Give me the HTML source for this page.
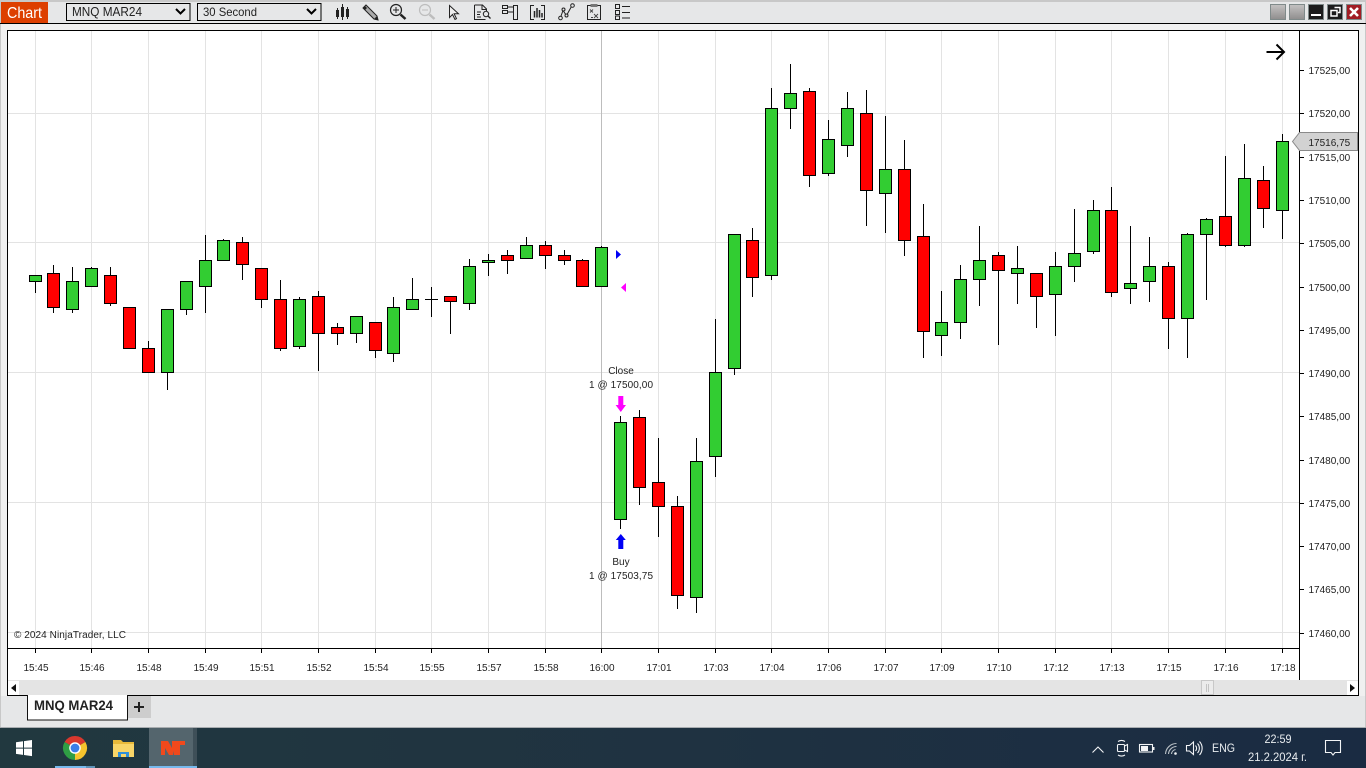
<!DOCTYPE html>
<html><head><meta charset="utf-8"><title>Chart</title>
<style>
html,body{margin:0;padding:0;width:1366px;height:768px;overflow:hidden;background:#e6e7e8}
svg{display:block;position:absolute;left:0;top:0}
text{font-family:"Liberation Sans",sans-serif;fill:#222}
.a text{font-size:10px}
.g{stroke:#e3e3e3;stroke-width:1;fill:none}
.w{stroke:#000;stroke-width:1}
.u{fill:#32cd32;stroke:#000;stroke-width:1}
.d{fill:#f00;stroke:#000;stroke-width:1}
.i{fill:none;stroke:#222;stroke-width:1}
.t{fill:none;stroke:#f2f4f6;stroke-width:1.1}
</style></head><body>
<svg width="1366" height="768" viewBox="0 0 1366 768">
<defs><linearGradient id="tb" x1="0" x2="1" y1="0" y2="0"><stop offset="0" stop-color="#21383f"/><stop offset="0.5" stop-color="#1f3241"/><stop offset="1" stop-color="#1a2b42"/></linearGradient>
<linearGradient id="gb" x1="0" x2="0" y1="0" y2="1"><stop offset="0" stop-color="#c4c2c2"/><stop offset="1" stop-color="#8f8d8d"/></linearGradient></defs>
<!-- window backgrounds -->
<rect width="1366" height="768" fill="#e6e7e8"/>
<rect y="0" width="1366" height="2" fill="#c8c8c8"/>
<rect y="24" width="1366" height="672" fill="#f0f0f0"/>
<rect y="696" width="1366" height="31" fill="#e6e7e8"/>
<rect x="0" y="0" width="1" height="727" fill="#c8c8c8"/><rect x="1365" y="0" width="1" height="727" fill="#c8c8c8"/>
<rect y="23" width="1366" height="1" fill="#000"/>
<!-- Chart tag -->
<rect x="1" y="2" width="47" height="21" fill="#dd3f00"/>
<text x="7" y="18" textLength="35" lengthAdjust="spacingAndGlyphs" style="font-size:16px;fill:#fff">Chart</text>
<!-- dropdowns -->
<rect x="66.5" y="3.5" width="123.5" height="17" fill="#e6e7e8" stroke="#000"/>
<text x="72" y="16" textLength="70" lengthAdjust="spacingAndGlyphs" style="font-size:12.5px">MNQ MAR24</text>
<path d="M176 9l4.500 4.500L185 9" fill="none" stroke="#000" stroke-width="2"/>
<rect x="197.500" y="3.500" width="123.500" height="17" fill="#e6e7e8" stroke="#000"/>
<text x="203" y="16" textLength="54" lengthAdjust="spacingAndGlyphs" style="font-size:12px">30 Second</text>
<path d="M307 9l4.500 4.500L316 9" fill="none" stroke="#000" stroke-width="2"/>
<!-- toolbar icons -->
<g>
<path d="M337.500 8v11M342.500 4v16M347.500 7v12" stroke="#222" stroke-width="1"/>
<rect x="336" y="10" width="3" height="7" fill="#222"/><rect x="341" y="7" width="3" height="10" fill="#222"/><rect x="346" y="9" width="3" height="8" fill="#222"/>
<path d="M363 8l3-3 11 11 1 4-4-1z" fill="#aaa" stroke="#222" stroke-width="1"/><path d="M365 6l-2 2 2 2 2-2zM374 19l4 1-1-4z" fill="#222"/>
<circle cx="396" cy="10" r="5.500" fill="none" stroke="#222" stroke-width="1.200"/><path d="M393 10h6M396 7v6" stroke="#222"/><path d="M400.500 14.500l5 4.500" stroke="#222" stroke-width="2.500"/>
<circle cx="425" cy="10" r="5.500" fill="none" stroke="#bdbdbd" stroke-width="1.200"/><path d="M422 10h6" stroke="#bdbdbd"/><path d="M429.500 14.500l5 4.500" stroke="#bdbdbd" stroke-width="2.500"/>
<path d="M449.500 5.500v12l3-3 2.500 5 1.500-.8-2.400-5h4.400z" fill="#eee" stroke="#222"/>
<path d="M474.500 5h8l4 4v2M474.500 5v14.500h11" class="i"/><path d="M482 5v4.500h4.500M477 12h4M477 14.500h3M477 17h4" class="i"/><circle cx="486" cy="14" r="2.700" class="i"/><path d="M488 16l2.500 2.500" stroke="#222" stroke-width="1.300"/>
<path d="M502.500 5.500h5v3h-5zM502.500 10.500h5v3h-5zM507.500 7h6M507.500 12h6" class="i"/><rect x="513.500" y="5.500" width="4" height="14" class="i"/>
<path d="M534 5.500h-3.500v14H534M541 5.500h3.500v14H541" class="i"/><path d="M534.500 11v6.500M537 8v9.500M539.500 10v7.500M542 13v4.500" stroke="#222" stroke-width="1.500"/>
<path d="M560.500 17.500l2.500-7 3.500 5 5.500-10" class="i"/><circle cx="560.500" cy="18" r="1.800" fill="#e6e7e8" stroke="#222"/><circle cx="563.500" cy="9.500" r="1.500" fill="#e6e7e8" stroke="#222"/><circle cx="566.500" cy="15.500" r="1.500" fill="#e6e7e8" stroke="#222"/><circle cx="572.500" cy="5.500" r="1.800" fill="#e6e7e8" stroke="#222"/>
<rect x="587.500" y="5.500" width="13" height="14" class="i"/><rect x="590.500" y="4" width="7" height="3" fill="#777"/><path d="M590 9.500l3 3M593 9.500l-3 3M594 14l4 4M598 14l-4 4M591 17.500h2" stroke="#444" stroke-width=".9"/>
<path d="M615.500 4.500h4v4h-4zM615.500 10.500h4v4h-4zM615.500 16h4v3.500h-4z" class="i"/><path d="M622 6.500h8M622 12.500h8M622 18h8" stroke="#222"/>
</g>
<!-- window buttons -->
<rect x="1270.500" y="4.500" width="15" height="15" fill="url(#gb)" stroke="#7f8a8a"/>
<rect x="1289.500" y="4.500" width="15" height="15" fill="url(#gb)" stroke="#7f8a8a"/>
<rect x="1308.500" y="4.500" width="15" height="15" fill="#1c1c1c" stroke="#7f8a8a"/><rect x="1311" y="14" width="10" height="2" fill="#fff"/>
<rect x="1327.500" y="4.500" width="15" height="15" fill="#1c1c1c" stroke="#7f8a8a"/><path d="M1334.500 7.500h5.500v5h-2M1331 10.500h6v5.500h-6z" fill="none" stroke="#fff" stroke-width="1.500"/>
<rect x="1346.500" y="4.500" width="15" height="15" fill="#a11d24" stroke="#7f8a8a"/><path d="M1350 8l8 8M1358 8l-8 8" stroke="#fff" stroke-width="2.600"/>

<!-- chart frame -->
<rect x="7.500" y="30.500" width="1351" height="665" fill="#fff" stroke="#000"/>
<g shape-rendering="crispEdges">
<path class="g" d="M8 113.500H1299M8 242.500H1299M8 372.500H1299M8 502.500H1299M8 632.500H1299"/>
<path class="g" d="M35.500 31V648M91.500 31V648M148.500 31V648M205.500 31V648M261.500 31V648M318.500 31V648M375.500 31V648M431.500 31V648M488.500 31V648M545.500 31V648M658.500 31V648M715.500 31V648M771.500 31V648M828.500 31V648M885.500 31V648M941.500 31V648M998.500 31V648M1055.500 31V648M1111.500 31V648M1168.500 31V648M1225.500 31V648M1282.500 31V648"/>
<path d="M601.500 31V648" stroke="#bdbdbd"/>
<!-- axes -->
<path d="M1299.500 31V680M8 648.500H1299" stroke="#000" fill="none"/>
<path d="M1300 70.500h4M1300 113.500h4M1300 157.500h4M1300 200.500h4M1300 243.500h4M1300 287.500h4M1300 330.500h4M1300 373.500h4M1300 416.500h4M1300 460.500h4M1300 503.500h4M1300 546.500h4M1300 589.500h4M1300 633.500h4" stroke="#000"/>
<path d="M35.500 649v4M91.500 649v4M148.500 649v4M205.500 649v4M261.500 649v4M318.500 649v4M375.500 649v4M431.500 649v4M488.500 649v4M545.500 649v4M601.500 649v4M658.500 649v4M715.500 649v4M771.500 649v4M828.500 649v4M885.500 649v4M941.500 649v4M998.500 649v4M1055.500 649v4M1111.500 649v4M1168.500 649v4M1225.500 649v4M1282.500 649v4" stroke="#000"/>
<!-- wicks -->
<path class="w" d="M35.500 275V293M53.500 265V313M72.500 267V313M91.500 267V287M110.500 267V306M148.500 341V349M167.500 309V390M186.500 281V315M205.500 235V313M223.500 239V241M242.500 237V280M261.500 268V308M280.500 280V351M299.500 297V349M318.500 291V371M337.500 323V345M356.500 316V343M375.500 322V358M393.500 297V362M412.500 278V310M431.500 287V317M450.500 296V334M469.500 259V310M488.500 254V276M507.500 250V274M526.500 237V259M545.500 241V269M564.500 250V265M582.500 259V261M601.500 246V248M620.500 416V529M639.500 410V505M658.500 438V537M677.500 496V609M696.500 438V613M715.500 319V477M734.500 234V375M752.500 228V297M771.500 88V280M790.500 64V129M809.500 88V187M828.500 120V176M847.500 92V157M866.500 90V226M885.500 116V233M904.500 140V256M923.500 204V358M941.500 291V356M960.500 265V339M979.500 226V306M998.500 252V345M1017.500 246V304M1036.500 273V328M1055.500 252V336M1074.500 209V282M1093.500 200V254M1111.500 187V297M1130.500 226V304M1149.500 237V302M1168.500 262V349M1187.500 233V358M1206.500 218V300M1225.500 156V247M1244.500 144V247M1263.500 166V228M1282.500 134V239"/>
<path class="w" d="M425 299.500H438"/>
<!-- green bodies -->
<rect class="u" x="29.500" y="275.500" width="12" height="6"/><rect class="u" x="66.500" y="281.500" width="12" height="28"/><rect class="u" x="85.500" y="268.500" width="12" height="18"/><rect class="u" x="161.500" y="309.500" width="12" height="63"/><rect class="u" x="180.500" y="281.500" width="12" height="28"/><rect class="u" x="199.500" y="260.500" width="12" height="26"/><rect class="u" x="217.500" y="240.500" width="12" height="20"/><rect class="u" x="293.500" y="299.500" width="12" height="47"/><rect class="u" x="350.500" y="316.500" width="12" height="17"/><rect class="u" x="387.500" y="307.500" width="12" height="46"/><rect class="u" x="406.500" y="299.500" width="12" height="10"/><rect class="u" x="463.500" y="266.500" width="12" height="37"/><rect class="u" x="482.500" y="260.500" width="12" height="2"/><rect class="u" x="520.500" y="245.500" width="12" height="13"/><rect class="u" x="595.500" y="247.500" width="12" height="39"/><rect class="u" x="614.500" y="422.500" width="12" height="97"/><rect class="u" x="690.500" y="461.500" width="12" height="136"/><rect class="u" x="709.500" y="372.500" width="12" height="84"/><rect class="u" x="728.500" y="234.500" width="12" height="134"/><rect class="u" x="765.500" y="108.500" width="12" height="167"/><rect class="u" x="784.500" y="93.500" width="12" height="15"/><rect class="u" x="822.500" y="139.500" width="12" height="34"/><rect class="u" x="841.500" y="108.500" width="12" height="37"/><rect class="u" x="879.500" y="169.500" width="12" height="24"/><rect class="u" x="935.500" y="322.500" width="12" height="13"/><rect class="u" x="954.500" y="279.500" width="12" height="43"/><rect class="u" x="973.500" y="260.500" width="12" height="19"/><rect class="u" x="1011.500" y="268.500" width="12" height="5"/><rect class="u" x="1049.500" y="266.500" width="12" height="28"/><rect class="u" x="1068.500" y="253.500" width="12" height="13"/><rect class="u" x="1087.500" y="210.500" width="12" height="41"/><rect class="u" x="1124.500" y="283.500" width="12" height="5"/><rect class="u" x="1143.500" y="266.500" width="12" height="15"/><rect class="u" x="1181.500" y="234.500" width="12" height="84"/><rect class="u" x="1200.500" y="219.500" width="12" height="15"/><rect class="u" x="1238.500" y="178.500" width="12" height="67"/><rect class="u" x="1276.500" y="141.500" width="12" height="69"/>
<!-- red bodies -->
<rect class="d" x="47.500" y="273.500" width="12" height="34"/><rect class="d" x="104.500" y="275.500" width="12" height="28"/><rect class="d" x="123.500" y="307.500" width="12" height="41"/><rect class="d" x="142.500" y="348.500" width="12" height="24"/><rect class="d" x="236.500" y="242.500" width="12" height="22"/><rect class="d" x="255.500" y="268.500" width="12" height="31"/><rect class="d" x="274.500" y="299.500" width="12" height="49"/><rect class="d" x="312.500" y="296.500" width="12" height="37"/><rect class="d" x="331.500" y="327.500" width="12" height="6"/><rect class="d" x="369.500" y="322.500" width="12" height="28"/><rect class="d" x="444.500" y="296.500" width="12" height="5"/><rect class="d" x="501.500" y="255.500" width="12" height="5"/><rect class="d" x="539.500" y="245.500" width="12" height="10"/><rect class="d" x="558.500" y="255.500" width="12" height="5"/><rect class="d" x="576.500" y="260.500" width="12" height="26"/><rect class="d" x="633.500" y="417.500" width="12" height="70"/><rect class="d" x="652.500" y="482.500" width="12" height="24"/><rect class="d" x="671.500" y="506.500" width="12" height="89"/><rect class="d" x="746.500" y="240.500" width="12" height="37"/><rect class="d" x="803.500" y="91.500" width="12" height="84"/><rect class="d" x="860.500" y="113.500" width="12" height="77"/><rect class="d" x="898.500" y="169.500" width="12" height="71"/><rect class="d" x="917.500" y="236.500" width="12" height="95"/><rect class="d" x="992.500" y="255.500" width="12" height="15"/><rect class="d" x="1030.500" y="273.500" width="12" height="23"/><rect class="d" x="1105.500" y="210.500" width="12" height="82"/><rect class="d" x="1162.500" y="266.500" width="12" height="52"/><rect class="d" x="1219.500" y="216.500" width="12" height="29"/><rect class="d" x="1257.500" y="180.500" width="12" height="28"/>
</g>
<!-- markers -->
<path d="M616 250l5 4.500-5 4.500z" fill="#0000f5"/>
<path d="M626 283v9l-5-4.500z" fill="#f0f"/>
<path d="M618.300 396h5v9h2.700l-5.200 7-5.200-7h2.700z" fill="#f0f"/>
<path d="M620.800 534l5 6h-2.500v9h-5v-9h-2.500z" fill="#0000f5"/>
<g class="a" text-anchor="middle">
<text x="621" y="374">Close</text><text x="621" y="388" textLength="64">1 @ 17500,00</text>
<text x="621" y="565">Buy</text><text x="621" y="579" textLength="64">1 @ 17503,75</text>
</g>
<!-- arrow -->
<path d="M1266.500 52h17M1276.500 44.500l7.500 7.500-7.500 7.500" fill="none" stroke="#000" stroke-width="2"/>
<!-- price marker -->
<path d="M1292.500 141.500l7-9h58v18h-58z" fill="#d2d2d2" stroke="#8a8a8a"/>
<!-- axis labels -->
<g class="a">
<text x="1308.500" y="74">17525,00</text><text x="1308.500" y="117">17520,00</text><text x="1308.500" y="146">17516,75</text><text x="1308.500" y="161">17515,00</text><text x="1308.500" y="204">17510,00</text><text x="1308.500" y="247">17505,00</text><text x="1308.500" y="291">17500,00</text><text x="1308.500" y="334">17495,00</text><text x="1308.500" y="377">17490,00</text><text x="1308.500" y="420">17485,00</text><text x="1308.500" y="464">17480,00</text><text x="1308.500" y="507">17475,00</text><text x="1308.500" y="550">17470,00</text><text x="1308.500" y="593">17465,00</text><text x="1308.500" y="637">17460,00</text>
<text x="14" y="638" textLength="112">© 2024 NinjaTrader, LLC</text>
</g>
<g class="a" text-anchor="middle">
<text x="36" y="671">15:45</text><text x="92" y="671">15:46</text><text x="149" y="671">15:48</text><text x="206" y="671">15:49</text><text x="262" y="671">15:51</text><text x="319" y="671">15:52</text><text x="376" y="671">15:54</text><text x="432" y="671">15:55</text><text x="489" y="671">15:57</text><text x="546" y="671">15:58</text><text x="602" y="671">16:00</text><text x="659" y="671">17:01</text><text x="716" y="671">17:03</text><text x="772" y="671">17:04</text><text x="829" y="671">17:06</text><text x="886" y="671">17:07</text><text x="942" y="671">17:09</text><text x="999" y="671">17:10</text><text x="1056" y="671">17:12</text><text x="1112" y="671">17:13</text><text x="1169" y="671">17:15</text><text x="1226" y="671">17:16</text><text x="1283" y="671">17:18</text>
</g>
<!-- scrollbar -->
<rect x="8" y="680" width="1350" height="15" fill="#e4e4e4"/>
<rect x="8" y="681" width="11" height="14" fill="#fff"/><path d="M16 684v8l-5-4z" fill="#111"/>
<rect x="1347" y="681" width="11" height="14" fill="#fff"/><path d="M1350 684v8l5-4z" fill="#111"/>
<rect x="1201.500" y="680.500" width="12" height="14" fill="#ececec" stroke="#c8c8c8"/><path d="M1206.500 684v8M1208.500 684v8" stroke="#c4c4c4"/>
<!-- tab -->
<rect x="27.500" y="695" width="100" height="25" fill="#fff"/><path d="M27.500 695v25h100v-25" fill="none" stroke="#111"/>
<text x="34" y="710" textLength="79" lengthAdjust="spacingAndGlyphs" style="font-size:14px;font-weight:bold">MNQ MAR24</text>
<rect x="128" y="696" width="23" height="22" fill="#cdcdcd"/>
<path d="M134 707h10M139 702v10" stroke="#222" stroke-width="2"/>
<!-- taskbar -->
<rect y="727" width="1366" height="41" fill="url(#tb)"/>
<rect y="727" width="1366" height="1" fill="#a9adb0"/>
<rect x="149" y="728" width="44" height="40" fill="#54656d"/><rect x="193" y="728" width="4" height="40" fill="#3e4f58"/>
<rect x="149" y="766" width="48" height="2" fill="#76b9ed"/>
<rect x="55" y="766" width="31" height="2" fill="#76b9ed"/><rect x="86" y="766" width="9" height="2" fill="#5f93b8"/>
<path d="M16 742.300l7-1v6.300h-7zM24 741.100l8-1.100v7.600h-8zM16 748.600h7v6.300l-7-1zM24 748.600h8v7.500l-8-1.100z" fill="#fff"/>
<path d="M75 748L64.600 742A12 12 0 0 1 85.400 742Z" fill="#d9382e"/>
<path d="M75 748L85.400 742A12 12 0 0 1 75 760Z" fill="#f6c42d"/>
<path d="M75 748L75 760A12 12 0 0 1 64.600 742Z" fill="#2f9e44"/>
<circle cx="75" cy="748" r="5.800" fill="#fff"/><circle cx="75" cy="748" r="4.400" fill="#3b7ee8"/>
<path d="M113 740h8l2 2h11v15h-21z" fill="#e8b93a"/><rect x="113" y="744" width="21" height="13" fill="#f8d568"/>
<path d="M118 757v-5h11v5h-3v-3h-5v3z" fill="#2f8fd8"/>
<path d="M161 741h7l4 7v-7h13v4h-5v10h-6v-4l-1 4h-4l-4-7v7h-4z" fill="#f0491c"/>
<!-- tray -->
<path d="M1092.500 752.500l5.500-5.500 5.500 5.500" class="t"/>
<rect x="1117.500" y="744.500" width="7" height="7" rx="1" class="t"/><path d="M1124.500 746l3-1.500v7l-3-1.500M1118 741.500a7 7 0 0 1 7 0M1118 755a7 7 0 0 0 7 0" class="t"/>
<rect x="1139.500" y="744.500" width="13" height="7.500" class="t"/><rect x="1141" y="746" width="7" height="5" fill="#f2f4f6"/><rect x="1153" y="747" width="1.500" height="3" fill="#f2f4f6"/>
<path d="M1165.500 754a11 11 0 0 1 11-10.500M1168.500 754a8 8 0 0 1 8-7.500M1171.500 754a5 5 0 0 1 4-4.500" fill="none" stroke="#b9c0c6" stroke-width="1.100"/><circle cx="1175.500" cy="753.500" r="1.300" fill="#f2f4f6"/>
<path d="M1186.500 745.500h3l4-3.500v12.500l-4-3.500h-3zM1195.500 745.500a4 4 0 0 1 0 5.500M1197.500 743.500a7 7 0 0 1 0 9.500M1199.500 741.500a10 10 0 0 1 0 13.500" class="t"/>
<text x="1212" y="752" textLength="23" lengthAdjust="spacingAndGlyphs" style="font-size:12px;fill:#e8ecef">ENG</text>
<text x="1278" y="743" text-anchor="middle" textLength="27" lengthAdjust="spacingAndGlyphs" style="font-size:12px;fill:#e8ecef">22:59</text>
<text x="1277.500" y="761" text-anchor="middle" textLength="59" lengthAdjust="spacingAndGlyphs" style="font-size:12px;fill:#e8ecef">21.2.2024 г.</text>
<path d="M1325.500 740.500h15v12h-5.500l-2 2.500-2-2.500h-5.500z" class="t"/>
</svg>
</body></html>
